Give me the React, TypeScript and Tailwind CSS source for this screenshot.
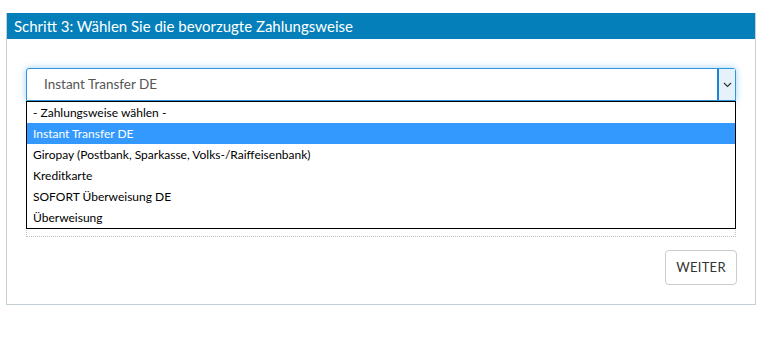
import { useState } from "react";

const options = [
  "- Zahlungsweise wählen -",
  "Instant Transfer DE",
  "Giropay (Postbank, Sparkasse, Volks-/Raiffeisenbank)",
  "Kreditkarte",
  "SOFORT Überweisung DE",
  "Überweisung",
];

export default function App() {
  const [selected, setSelected] = useState(1);

  return (
    <div className="min-h-[342px] bg-white pl-[6px] pt-[13px] font-['Lato',sans-serif]">
      <div className="w-[750px] border border-t-0 border-[#c3cfd5] bg-white">
        <div className="flex h-[26px] items-center bg-[#057fba] px-[7px] text-[15px] text-white">
          Schritt 3: Wählen Sie die bevorzugte Zahlungsweise
        </div>

        <div className="px-[19px] pt-[29px] pb-[19px]">
          <div className="relative">
            {/* focused select */}
            <div className="flex h-[33px] items-stretch rounded-t-[3px] border border-[#2b96dd] bg-white shadow-[0_0_7px_rgba(80,170,235,0.55)]">
              <div className="flex flex-1 items-center pl-[17px] text-[13.5px] text-[#555]">
                {options[selected]}
              </div>
              <div className="flex w-[18px] items-center justify-center border-l-2 border-[#1b82d9] bg-[#e5f1fb]">
                <svg width="9" height="6" viewBox="0 0 9 6" fill="none">
                  <path d="M1 1l3.5 3.5L8 1" stroke="#333" strokeWidth="1.2" />
                </svg>
              </div>
            </div>

            <div className="h-[136px] border-x border-b border-dotted border-[#b8c3c8]" />

            {/* open dropdown list */}
            <ul className="absolute left-0 top-[33px] w-[710px] border border-black bg-white text-[12px] text-black">
              {options.map((o, i) => (
                <li
                  key={o}
                  onClick={() => setSelected(i)}
                  className={
                    "flex h-[21px] items-center px-[6px] " +
                    (i === selected ? "bg-[#3399ff] text-white" : "")
                  }
                >
                  {o}
                </li>
              ))}
            </ul>
          </div>

          <div className="mt-[13px] flex justify-end">
            <button className="-mr-px h-[35px] w-[72px] rounded-[4px] border border-[#ccc] bg-white text-[13px] tracking-[0.3px] text-[#333]">
              WEITER
            </button>
          </div>
        </div>
      </div>
    </div>
  );
}
